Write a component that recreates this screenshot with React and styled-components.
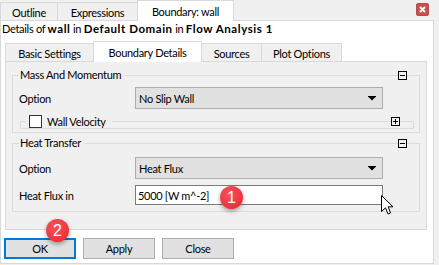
import styled, { createGlobalStyle } from "styled-components";

const GlobalStyle = createGlobalStyle`
  html, body {
    margin: 0;
    padding: 0;
    background: #f0f0f0;
  }
  body {
    font-family: Lato, "Noto Sans", sans-serif;
    font-size: 11px;
    letter-spacing: -0.3px;
    color: #000;
  }
`;

const Dialog = styled.div`
  position: relative;
  width: 439px;
  height: 265px;
  overflow: hidden;
  background: #f0f0f0;
`;

const TopBar = styled.div`
  display: flex;
  align-items: flex-end;
  width: 434px;
  height: 20px;
`;

const TopTab = styled.div`
  box-sizing: border-box;
  position: relative;
  z-index: ${(p) => (p.$active ? 2 : 1)};
  width: ${(p) => p.$w}px;
  height: ${(p) => (p.$active ? 21 : 18)}px;
  margin-left: ${(p) => (p.$first ? 0 : -1)}px;
  margin-bottom: ${(p) => (p.$active ? -1 : 0)}px;
  padding-top: 1px;
  border: 1px solid #d9d9d9;
  border-bottom: none;
  background: ${(p) => (p.$active ? "#fff" : "#f0f0f0")};
  display: flex;
  align-items: center;
  justify-content: center;
  line-height: 1;
  white-space: nowrap;
`;

const CloseButton = styled.div`
  align-self: flex-start;
  margin: 3px 5px 0 auto;
  width: 13px;
  height: 13px;
  box-sizing: border-box;
  border-radius: 2px;
  background: #c75050;
  border: 1px solid #b94a4a;
  display: flex;
  align-items: center;
  justify-content: center;
`;

const OuterPane = styled.div`
  box-sizing: border-box;
  width: 434px;
  height: 244px;
  border: 1px solid #d9d9d9;
  background: #fff;
`;

const DetailsLine = styled.div`
  height: 16px;
  line-height: 16px;
  padding-left: 1px;
  white-space: nowrap;
  b {
    font-weight: 700;
    font-size: 11.5px;
    letter-spacing: 0.55px;
  }
`;

const InnerTabBar = styled.div`
  display: flex;
  align-items: flex-end;
  height: 20px;
  margin: 4px 0 0 4px;
`;

const InnerPane = styled.div`
  box-sizing: border-box;
  width: 422px;
  height: 169px;
  margin-left: 4px;
  border: 1px solid #d9d9d9;
  background: #f0f0f0;
  padding: 13px 6px 0;
  display: flex;
  flex-direction: column;
  gap: 10px;
`;

const Group = styled.div`
  position: relative;
  box-sizing: border-box;
  height: ${(p) => p.$h}px;
  border: 1px solid #dcdcdc;
  padding-top: ${(p) => p.$pt}px;
  display: flex;
  flex-direction: column;
`;

const GroupTitle = styled.div`
  position: absolute;
  left: 6px;
  top: -8px;
  height: 14px;
  line-height: 14px;
  padding: 0 3px 0 1px;
  background: #f0f0f0;
  white-space: nowrap;
`;

const ToggleBox = styled.div`
  position: absolute;
  right: ${(p) => p.$right}px;
  top: -5px;
  width: 9px;
  height: 9px;
  box-sizing: border-box;
  border: 1px solid #000;
  background: #f0f0f0;
  display: flex;
  align-items: center;
  justify-content: center;
`;

const FieldRow = styled.div`
  display: grid;
  grid-template-columns: 122px 248px;
  align-items: center;
  margin-top: ${(p) => p.$mt || 0}px;
`;

const Label = styled.div`
  padding-left: 6px;
  white-space: nowrap;
`;

const Combo = styled.div`
  box-sizing: border-box;
  height: 22px;
  border: 1px solid #adadad;
  background: #e1e1e1;
  display: flex;
  align-items: center;
  justify-content: space-between;
  padding: 0 6px 0 3px;
`;

const TextInput = styled.div`
  box-sizing: border-box;
  height: 20px;
  border: 1px solid #7a7a7a;
  background: #fff;
  display: flex;
  align-items: center;
  padding-left: 2px;
`;

const SubGroup = styled.div`
  position: relative;
  box-sizing: border-box;
  height: 8px;
  margin: 12px 5px 0 7px;
  border: 1px solid #dcdcdc;
`;

const CheckTitle = styled.div`
  position: absolute;
  left: 5px;
  top: -8px;
  height: 14px;
  display: flex;
  align-items: center;
  gap: 5px;
  padding: 0 6px 0 3px;
  background: #f0f0f0;
  white-space: nowrap;
`;

const CheckBox = styled.div`
  width: 13px;
  height: 13px;
  box-sizing: border-box;
  border: 1px solid #333;
  background: #fff;
`;

const ButtonRow = styled.div`
  display: flex;
  gap: 7px;
  margin: 8px 0 0 3px;
`;

const Button = styled.div`
  box-sizing: border-box;
  width: 72px;
  height: 21px;
  border: ${(p) => (p.$default ? "2px solid #0078d7" : "1px solid #adadad")};
  background: #e1e1e1;
  display: flex;
  align-items: center;
  justify-content: center;
`;

const Badge = styled.div`
  position: absolute;
  left: ${(p) => p.$x}px;
  top: ${(p) => p.$y}px;
  width: 23px;
  height: 23px;
  border-radius: 50%;
  background: radial-gradient(circle at 40% 35%, #f8525a, #e3262f);
  box-shadow: 0 2px 4px rgba(0, 0, 0, 0.35);
  color: #fff;
  font-family: "Liberation Sans", Arial, sans-serif;
  font-size: 16px;
  letter-spacing: 0;
  display: flex;
  align-items: center;
  justify-content: center;
  z-index: 5;
`;

const Cursor = styled.svg`
  position: absolute;
  left: 381px;
  top: 195px;
  z-index: 6;
`;

function Arrow() {
  return (
    <svg width="8" height="5" viewBox="0 0 8 5">
      <rect x="0" y="0" width="8" height="1" fill="#000" />
      <polygon points="0.5,1 7.5,1 4,4.5" fill="#000" />
    </svg>
  );
}

function Minus() {
  return (
    <svg width="7" height="7" viewBox="0 0 7 7">
      <rect x="1" y="3" width="5" height="1" fill="#000" />
    </svg>
  );
}

function Plus() {
  return (
    <svg width="7" height="7" viewBox="0 0 7 7">
      <rect x="1" y="3" width="5" height="1" fill="#000" />
      <rect x="3" y="1" width="1" height="5" fill="#000" />
    </svg>
  );
}

export default function App() {
  return (
    <>
      <GlobalStyle />
      <Dialog>
        <TopBar>
          <TopTab $w={58} $first>Outline</TopTab>
          <TopTab $w={81}>Expressions</TopTab>
          <TopTab $w={97} $active>Boundary: wall</TopTab>
          <CloseButton>
            <svg width="7" height="7" viewBox="0 0 7 7">
              <path d="M1 1 L6 6 M6 1 L1 6" stroke="#fff" strokeWidth="1.8" />
            </svg>
          </CloseButton>
        </TopBar>
        <OuterPane>
          <DetailsLine>
            Details of <b>wall</b> in <b>Default Domain</b> in <b>Flow Analysis 1</b>
          </DetailsLine>
          <InnerTabBar>
            <TopTab $w={89} $first>Basic Settings</TopTab>
            <TopTab $w={109} $active>Boundary Details</TopTab>
            <TopTab $w={61}>Sources</TopTab>
            <TopTab $w={81}>Plot Options</TopTab>
          </InnerTabBar>
          <InnerPane>
            <Group $h={58} $pt={11}>
              <GroupTitle>Mass And Momentum</GroupTitle>
              <ToggleBox $right={12}><Minus /></ToggleBox>
              <FieldRow>
                <Label>Option</Label>
                <Combo>No Slip Wall<Arrow /></Combo>
              </FieldRow>
              <SubGroup>
                <CheckTitle>
                  <CheckBox />
                  Wall Velocity
                </CheckTitle>
                <ToggleBox $right={13}><Plus /></ToggleBox>
              </SubGroup>
            </Group>
            <Group $h={69} $pt={13}>
              <GroupTitle>Heat Transfer</GroupTitle>
              <ToggleBox $right={12}><Minus /></ToggleBox>
              <FieldRow>
                <Label>Option</Label>
                <Combo>Heat Flux<Arrow /></Combo>
              </FieldRow>
              <FieldRow $mt={6}>
                <Label>Heat Flux in</Label>
                <TextInput>5000 [W m^-2]</TextInput>
              </FieldRow>
            </Group>
          </InnerPane>
          <ButtonRow>
            <Button $default>OK</Button>
            <Button>Apply</Button>
            <Button>Close</Button>
          </ButtonRow>
        </OuterPane>
        <Badge $x={220} $y={186}>1</Badge>
        <Badge $x={46} $y={219}>2</Badge>
        <Cursor width="13" height="21" viewBox="0 0 13 21">
          <path
            d="M0.5 0.5 L0.5 16.5 L4.5 12.8 L7 19 L9.5 18 L7.2 11.8 L12 11.8 Z"
            fill="#fff"
            stroke="#000"
            strokeWidth="1"
            strokeLinejoin="miter"
          />
        </Cursor>
      </Dialog>
    </>
  );
}
